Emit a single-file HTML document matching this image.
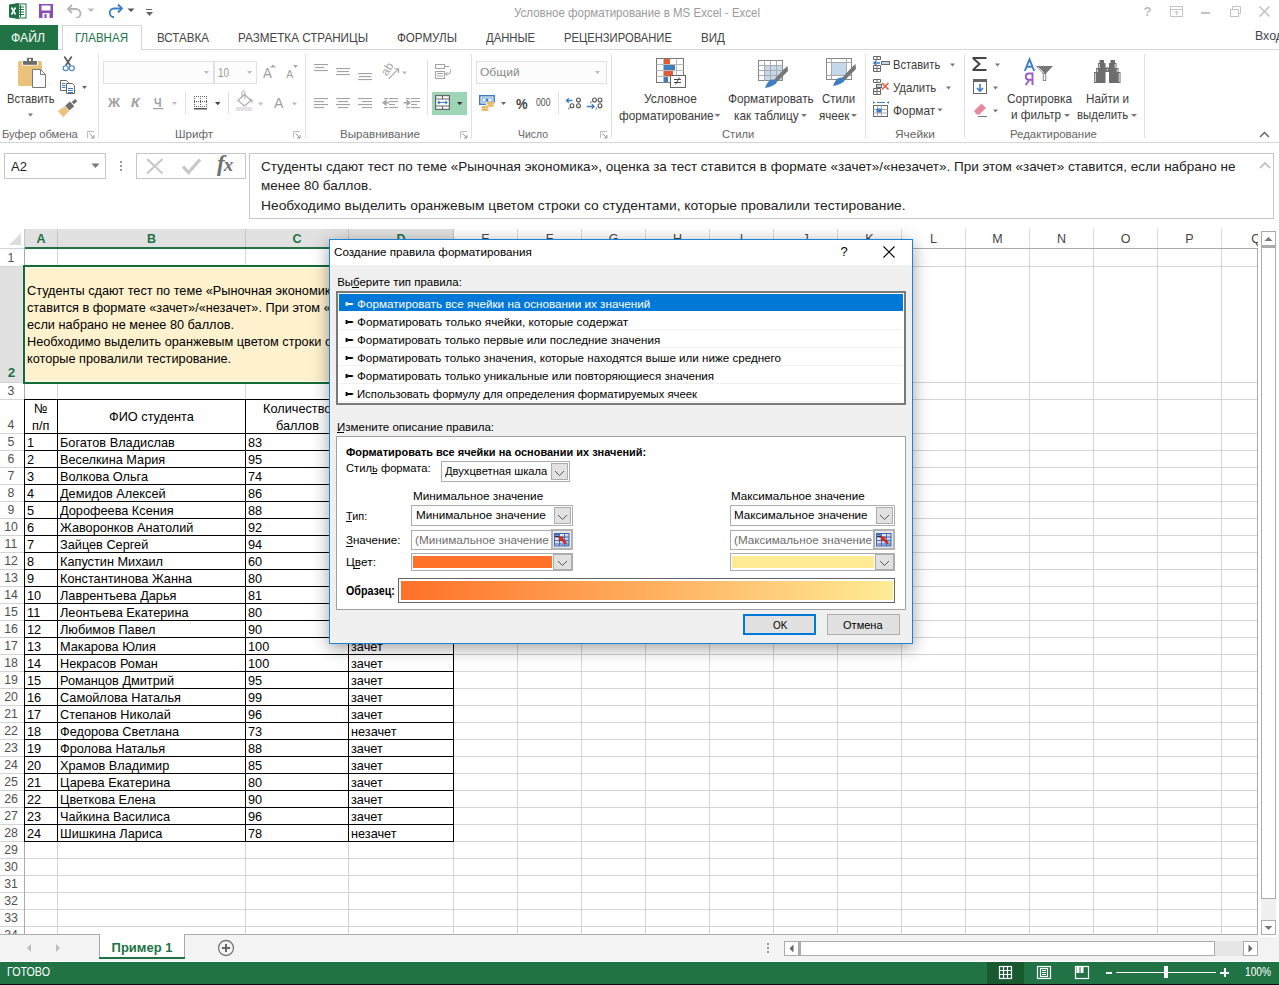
<!DOCTYPE html>
<html><head><meta charset="utf-8"><title>Excel</title><style>*{margin:0;padding:0;box-sizing:border-box}
html,body{width:1279px;height:985px;overflow:hidden}
body{position:relative;background:#fff;font-family:"Liberation Sans",sans-serif}
.a{position:absolute}
.t{position:absolute;white-space:nowrap}
</style></head><body>
<svg class="a" style="left:8px;top:2px" width="20" height="18" viewBox="0 0 20 18">
<rect x="8" y="2" width="10" height="14" fill="#fff" stroke="#1e7145" stroke-width="1"/>
<path d="M10 5H16M10 7.5H16M10 10H16M10 12.5H16M12.5 3V15" stroke="#1e7145" stroke-width="1"/>
<path d="M1 2.5 L11 1 V17 L1 15.5 Z" fill="#1e7145"/>
<path d="M3.5 5.5 L7.5 12.5 M7.5 5.5 L3.5 12.5" stroke="#fff" stroke-width="1.6"/>
</svg>
<svg class="a" style="left:38px;top:3px" width="16" height="16" viewBox="0 0 16 16">
<path d="M1 1H15V15H1Z" fill="#8a4fb5"/>
<rect x="3.5" y="2.5" width="9" height="5" fill="#fff"/>
<rect x="4.5" y="10" width="7" height="5" fill="#fff"/>
<rect x="6.5" y="11" width="2" height="4" fill="#8a4fb5"/>
</svg>
<svg class="a" style="left:66px;top:3px" width="18" height="15" viewBox="0 0 18 15">
<path d="M6 2 L2 6 L6 10" fill="none" stroke="#b3b3b3" stroke-width="1.8"/>
<path d="M2.5 6 H10 A4.5 4.5 0 0 1 10 15" fill="none" stroke="#b3b3b3" stroke-width="1.8"/>
</svg>
<svg class="a" style="left:87px;top:8px" width="8" height="5"><path d="M0.5 0.5H7.5L4 4Z" fill="#bbb"/></svg>
<svg class="a" style="left:106px;top:3px" width="18" height="15" viewBox="0 0 18 15">
<path d="M12 1.5 L16 5.5 L12 9.5" fill="none" stroke="#3a7cc4" stroke-width="1.8"/>
<path d="M15.5 5.5 H8 A4.2 4.2 0 0 0 8 14" fill="none" stroke="#3a7cc4" stroke-width="1.8"/>
</svg>
<svg class="a" style="left:127px;top:8px" width="8" height="5"><path d="M0.5 0.5H7.5L4 4Z" fill="#555"/></svg>
<svg class="a" style="left:145px;top:8px" width="9" height="9"><rect x="1" y="1" width="6" height="1" fill="#666"/><path d="M1 4H8L4.5 8Z" fill="#666"/></svg>
<div class="t" style="left:514.00px;top:5px;font-size:13.41px;line-height:15px;color:#9b9b9b;transform:scaleX(0.859);transform-origin:0 0;">Условное форматирование в MS Excel - Excel</div>
<div class="t" style="left:1143.53px;top:4px;font-size:13px;line-height:15px;color:#bdbdbd;font-weight:bold;">?</div>
<svg class="a" style="left:1169px;top:5px" width="16" height="13"><rect x="1.5" y="1.5" width="12" height="10" fill="none" stroke="#c4c4c4"/><path d="M1.5 4.5H13.5" stroke="#c4c4c4"/><path d="M7.5 10V6M5.5 8L7.5 6L9.5 8" fill="none" stroke="#c4c4c4"/></svg>
<div class="a" style="left:1201px;top:12px;width:9px;height:2px;background:#c4c4c4"></div>
<svg class="a" style="left:1229px;top:5px" width="13" height="13"><rect x="1.5" y="4.5" width="8" height="7" fill="none" stroke="#c4c4c4"/><path d="M3.5 4.5V1.5H11.5V8.5H9.5" fill="none" stroke="#c4c4c4"/></svg>
<svg class="a" style="left:1258px;top:5px" width="13" height="13"><path d="M1.5 1.5L11.5 11.5M11.5 1.5L1.5 11.5" stroke="#c4c4c4" stroke-width="1.6"/></svg>
<div class="a" style="left:0px;top:49px;width:1279px;height:1px;background:#d5d5d5"></div>
<div class="a" style="left:0px;top:25px;width:58px;height:25px;background:#217346"></div>
<div class="t" style="left:11.00px;top:31px;font-size:12.43px;line-height:14px;color:#fff;transform:scaleX(0.984);transform-origin:0 0;">ФАЙЛ</div>
<div class="a" style="left:62px;top:25px;width:80px;height:25px;background:#fff;border:1px solid #d5d5d5;border-bottom:none"></div>
<div class="t" style="left:75.00px;top:31px;font-size:12.43px;line-height:14px;color:#217346;transform:scaleX(0.930);transform-origin:0 0;">ГЛАВНАЯ</div>
<div class="t" style="left:157.00px;top:31px;font-size:12.43px;line-height:14px;color:#444;transform:scaleX(0.933);transform-origin:0 0;">ВСТАВКА</div>
<div class="t" style="left:238.00px;top:31px;font-size:12.43px;line-height:14px;color:#444;transform:scaleX(0.940);transform-origin:0 0;">РАЗМЕТКА СТРАНИЦЫ</div>
<div class="t" style="left:397.00px;top:31px;font-size:12.43px;line-height:14px;color:#444;transform:scaleX(0.934);transform-origin:0 0;">ФОРМУЛЫ</div>
<div class="t" style="left:486.00px;top:31px;font-size:12.43px;line-height:14px;color:#444;transform:scaleX(0.908);transform-origin:0 0;">ДАННЫЕ</div>
<div class="t" style="left:564.00px;top:31px;font-size:12.43px;line-height:14px;color:#444;transform:scaleX(0.903);transform-origin:0 0;">РЕЦЕНЗИРОВАНИЕ</div>
<div class="t" style="left:701.00px;top:31px;font-size:12.43px;line-height:14px;color:#444;transform:scaleX(0.936);transform-origin:0 0;">ВИД</div>
<div class="t" style="left:1255.00px;top:28px;font-size:13.27px;line-height:15px;color:#444;transform:scaleX(0.933);transform-origin:0 0;">Вход</div>
<div class="a" style="left:0px;top:142px;width:1279px;height:1px;background:#d5d5d5"></div>
<div class="a" style="left:98px;top:54px;width:1px;height:84px;background:#e1e1e1"></div>
<div class="a" style="left:305px;top:54px;width:1px;height:84px;background:#e1e1e1"></div>
<div class="a" style="left:471px;top:54px;width:1px;height:84px;background:#e1e1e1"></div>
<div class="a" style="left:611px;top:54px;width:1px;height:84px;background:#e1e1e1"></div>
<div class="a" style="left:865px;top:54px;width:1px;height:84px;background:#e1e1e1"></div>
<div class="a" style="left:964px;top:54px;width:1px;height:84px;background:#e1e1e1"></div>
<div class="a" style="left:1144px;top:54px;width:1px;height:84px;background:#e1e1e1"></div>
<div class="t" style="left:2.00px;top:128px;font-size:11.17px;line-height:12px;color:#666;">Буфер обмена</div>
<div class="t" style="left:175.00px;top:128px;font-size:11.17px;line-height:12px;color:#666;transform:scaleX(1.034);transform-origin:0 0;">Шрифт</div>
<div class="t" style="left:340.00px;top:128px;font-size:11.17px;line-height:12px;color:#666;transform:scaleX(1.040);transform-origin:0 0;">Выравнивание</div>
<div class="t" style="left:518.00px;top:128px;font-size:11.17px;line-height:12px;color:#666;transform:scaleX(0.934);transform-origin:0 0;">Число</div>
<div class="t" style="left:722.00px;top:128px;font-size:11.17px;line-height:12px;color:#666;">Стили</div>
<div class="t" style="left:895.00px;top:128px;font-size:11.17px;line-height:12px;color:#666;transform:scaleX(1.068);transform-origin:0 0;">Ячейки</div>
<div class="t" style="left:1010.00px;top:128px;font-size:11.17px;line-height:12px;color:#666;transform:scaleX(1.022);transform-origin:0 0;">Редактирование</div>
<svg class="a" style="left:87px;top:131px" width="8" height="8"><path d="M0.5 7V0.5H7" fill="none" stroke="#bbb"/><path d="M2.5 2.5L7 7M7 4V7H4" fill="none" stroke="#999"/></svg>
<svg class="a" style="left:293px;top:131px" width="8" height="8"><path d="M0.5 7V0.5H7" fill="none" stroke="#bbb"/><path d="M2.5 2.5L7 7M7 4V7H4" fill="none" stroke="#999"/></svg>
<svg class="a" style="left:460px;top:131px" width="8" height="8"><path d="M0.5 7V0.5H7" fill="none" stroke="#bbb"/><path d="M2.5 2.5L7 7M7 4V7H4" fill="none" stroke="#999"/></svg>
<svg class="a" style="left:600px;top:131px" width="8" height="8"><path d="M0.5 7V0.5H7" fill="none" stroke="#bbb"/><path d="M2.5 2.5L7 7M7 4V7H4" fill="none" stroke="#999"/></svg>
<svg class="a" style="left:1259px;top:131px" width="11" height="7"><path d="M1 6L5.5 1.5L10 6" fill="none" stroke="#666" stroke-width="1.5"/></svg>
<div class="a" style="left:4px;top:153px;width:102px;height:26px;border:1px solid #c6c6c6;background:#fff"></div>
<div class="t" style="left:11.00px;top:159px;font-size:13px;line-height:15px;color:#222;">A2</div>
<svg class="a" style="left:91px;top:163px" width="9" height="6"><path d="M0.5 0.5H8.5L4.5 5Z" fill="#777"/></svg>
<div class="a" style="left:120px;top:161px;width:2px;height:2px;background:#999"></div>
<div class="a" style="left:120px;top:165px;width:2px;height:2px;background:#999"></div>
<div class="a" style="left:120px;top:169px;width:2px;height:2px;background:#999"></div>
<div class="a" style="left:136px;top:153px;width:110px;height:26px;border:1px solid #c6c6c6;background:#fff"></div>
<svg class="a" style="left:144px;top:156px" width="20" height="20"><path d="M3 3L18.5 17.5M18.5 3L3 17.5" stroke="#c8c8c8" stroke-width="2.1"/></svg>
<svg class="a" style="left:180px;top:157px" width="22" height="19"><path d="M3 9.5L8.5 15.5L20 2.5" fill="none" stroke="#c8c8c8" stroke-width="3.2"/></svg>
<div class="t" style="left:217px;top:151px;font-family:'Liberation Serif',serif;font-style:italic;font-weight:bold;font-size:23px;line-height:26px;color:#707070;letter-spacing:-1px">f<span style="font-size:19px">x</span></div>
<div class="a" style="left:249px;top:153px;width:1025px;height:66px;border:1px solid #c6c6c6;background:#fff"></div>
<div class="t" style="left:261.00px;top:159px;font-size:13.27px;line-height:15px;color:#222;transform:scaleX(1.018);transform-origin:0 0;">Студенты сдают тест по теме «Рыночная экономика», оценка за тест ставится в формате «зачет»/«незачет». При этом «зачет» ставится, если набрано не</div>
<div class="t" style="left:261.00px;top:178px;font-size:13.27px;line-height:15px;color:#222;transform:scaleX(1.017);transform-origin:0 0;">менее 80 баллов.</div>
<div class="t" style="left:261.00px;top:198px;font-size:13.27px;line-height:15px;color:#222;transform:scaleX(1.040);transform-origin:0 0;">Необходимо выделить оранжевым цветом строки со студентами, которые провалили тестирование.</div>
<svg class="a" style="left:1259px;top:161px" width="12" height="8"><path d="M1 7L6 2L11 7" fill="none" stroke="#c6c6c6" stroke-width="2"/></svg>
<svg class="a" style="left:0;top:0" width="1279" height="143" viewBox="0 0 1279 143"><rect x="18" y="61" width="24" height="25" rx="1.5" fill="#eac27c"/><rect x="22" y="60.5" width="16" height="5" fill="#fff"/><rect x="23" y="61" width="14" height="3.8" fill="#6d6d6d"/><rect x="27" y="57.8" width="6" height="3.6" fill="#6d6d6d"/><rect x="29" y="59" width="2" height="2" fill="#fff"/><path d="M32.5 69.5H40.5L45.5 74.5V87.5H32.5Z" fill="#fff" stroke="#777" stroke-width="1"/><path d="M40.5 69.5V74.5H45.5" fill="none" stroke="#777" stroke-width="1"/><path d="M28 113.5H33L30.5 116.5Z" fill="#777"/><path d="M64.3 56.5L70.3 65.5M71.7 56.5L65.7 65.5" stroke="#5a5a5a" stroke-width="1.7" fill="none"/><circle cx="65.7" cy="68.2" r="2.5" fill="#fff" stroke="#3e7fc4" stroke-width="1.1"/><circle cx="71.8" cy="68.2" r="2.5" fill="#fff" stroke="#3e7fc4" stroke-width="1.1"/><path d="M60.5 80.5H66.5L68.5 82.5V90.5H60.5Z" fill="#fff" stroke="#666" stroke-width="1"/><rect x="62" y="83" width="3.5" height="1" fill="#3e7fc4"/><rect x="62" y="85" width="3.5" height="1" fill="#3e7fc4"/><rect x="62" y="87" width="3.5" height="1" fill="#3e7fc4"/><path d="M66.5 83.5H72.5L74.5 85.5V93.5H66.5Z" fill="#fff" stroke="#666" stroke-width="1"/><rect x="68" y="88" width="5" height="1" fill="#3e7fc4"/><rect x="68" y="90" width="5" height="1" fill="#3e7fc4"/><rect x="68" y="92" width="5" height="1" fill="#3e7fc4"/><path d="M82 86H87L84.5 89.0Z" fill="#666"/><g transform="translate(68 107.5) rotate(-42)"><path d="M-10 -4.2L-1.5 -3.2V3.2L-10 4.2Z" fill="#eac27c"/><rect x="-1" y="-3.2" width="6.5" height="6.4" fill="#6d6d6d"/><rect x="6.5" y="-1.6" width="4.5" height="3.2" fill="#6d6d6d"/></g><rect x="103.5" y="61.5" width="110" height="22" fill="#fcfcfc" stroke="#e1e1e1"/><rect x="214.5" y="61.5" width="42" height="22" fill="#fcfcfc" stroke="#e1e1e1"/><path d="M204 71H209L206.5 74.0Z" fill="#bbb"/><path d="M247 71H252L249.5 74.0Z" fill="#bbb"/><path d="M270 67.5L273 64.5L276 67.5Z" fill="#aaa"/><path d="M293 65H298L295.5 68Z" fill="#aaa"/><path d="M238 100.5L244.5 94.5L251 100.5L244.5 106Z" fill="#fff" stroke="#a9a9a9" stroke-width="1.1"/><path d="M242 97V92.5Q242 91 243.5 91Q245 91 245 92.5V99" fill="none" stroke="#a9a9a9" stroke-width="1"/><path d="M249.5 99Q253 98 252.5 104L251 101Z" fill="#a9a9a9"/><rect x="236" y="107" width="16" height="4" fill="#e5e1e5"/><rect x="194" y="96" width="1" height="1" fill="#666"/><rect x="194" y="98" width="1" height="1" fill="#666"/><rect x="194" y="100" width="1" height="1" fill="#666"/><rect x="194" y="101" width="1" height="1" fill="#666"/><rect x="194" y="102" width="1" height="1" fill="#666"/><rect x="194" y="104" width="1" height="1" fill="#666"/><rect x="194" y="106" width="1" height="1" fill="#666"/><rect x="196" y="96" width="1" height="1" fill="#666"/><rect x="196" y="101" width="1" height="1" fill="#666"/><rect x="196" y="106" width="1" height="1" fill="#666"/><rect x="198" y="96" width="1" height="1" fill="#666"/><rect x="198" y="101" width="1" height="1" fill="#666"/><rect x="198" y="106" width="1" height="1" fill="#666"/><rect x="200" y="96" width="1" height="1" fill="#666"/><rect x="200" y="98" width="1" height="1" fill="#666"/><rect x="200" y="100" width="1" height="1" fill="#666"/><rect x="200" y="101" width="1" height="1" fill="#666"/><rect x="200" y="102" width="1" height="1" fill="#666"/><rect x="200" y="104" width="1" height="1" fill="#666"/><rect x="200" y="106" width="1" height="1" fill="#666"/><rect x="202" y="96" width="1" height="1" fill="#666"/><rect x="202" y="101" width="1" height="1" fill="#666"/><rect x="202" y="106" width="1" height="1" fill="#666"/><rect x="204" y="96" width="1" height="1" fill="#666"/><rect x="204" y="101" width="1" height="1" fill="#666"/><rect x="204" y="106" width="1" height="1" fill="#666"/><rect x="206" y="96" width="1" height="1" fill="#666"/><rect x="206" y="98" width="1" height="1" fill="#666"/><rect x="206" y="100" width="1" height="1" fill="#666"/><rect x="206" y="101" width="1" height="1" fill="#666"/><rect x="206" y="102" width="1" height="1" fill="#666"/><rect x="206" y="104" width="1" height="1" fill="#666"/><rect x="206" y="106" width="1" height="1" fill="#666"/><rect x="194" y="108" width="13" height="1.5" fill="#555"/><path d="M215 102H220.5L217.75 105.25Z" fill="#444"/><path d="M172 102H177L174.5 105.0Z" fill="#bbb"/><path d="M258 102.5H263L260.5 105.5Z" fill="#bbb"/><path d="M292 102.5H297L294.5 105.5Z" fill="#bbb"/><rect x="185" y="92" width="1" height="22" fill="#e1e1e1"/><rect x="228" y="92" width="1" height="22" fill="#e1e1e1"/><rect x="153" y="108" width="10.5" height="1.2" fill="#9e9e9e"/><rect x="314" y="64" width="14" height="1.1" fill="#a3a3a3"/><rect x="315" y="67" width="9" height="1.1" fill="#a3a3a3"/><rect x="314" y="70" width="14" height="1.1" fill="#a3a3a3"/><rect x="336" y="68" width="14" height="1.1" fill="#a3a3a3"/><rect x="337" y="71" width="12" height="1.1" fill="#a3a3a3"/><rect x="336" y="74" width="14" height="1.1" fill="#a3a3a3"/><rect x="358" y="73" width="14" height="1.1" fill="#a3a3a3"/><rect x="359" y="76" width="12" height="1.1" fill="#a3a3a3"/><rect x="358" y="79" width="14" height="1.1" fill="#a3a3a3"/><rect x="314" y="98" width="14" height="1.1" fill="#a3a3a3"/><rect x="314" y="101" width="10" height="1.1" fill="#a3a3a3"/><rect x="314" y="104" width="14" height="1.1" fill="#a3a3a3"/><rect x="314" y="107" width="10" height="1.1" fill="#a3a3a3"/><rect x="336" y="98" width="14" height="1.1" fill="#a3a3a3"/><rect x="338" y="101" width="10" height="1.1" fill="#a3a3a3"/><rect x="336" y="104" width="14" height="1.1" fill="#a3a3a3"/><rect x="338" y="107" width="10" height="1.1" fill="#a3a3a3"/><rect x="358" y="98" width="14" height="1.1" fill="#a3a3a3"/><rect x="362" y="101" width="10" height="1.1" fill="#a3a3a3"/><rect x="358" y="104" width="14" height="1.1" fill="#a3a3a3"/><rect x="362" y="107" width="10" height="1.1" fill="#a3a3a3"/><rect x="384" y="98" width="4" height="1.1" fill="#a3a3a3"/><rect x="389" y="101" width="9" height="1.1" fill="#a3a3a3"/><rect x="389" y="104" width="6" height="1.1" fill="#a3a3a3"/><rect x="384" y="107" width="4" height="1.1" fill="#a3a3a3"/><rect x="389" y="98" width="9" height="1.1" fill="#a3a3a3"/><rect x="389" y="107" width="9" height="1.1" fill="#a3a3a3"/><path d="M382 102.8L386.5 99.3V106.3Z" fill="#a3a3a3"/><rect x="386" y="102" width="3" height="1.5" fill="#a3a3a3"/><rect x="406" y="98" width="4" height="1.1" fill="#a3a3a3"/><rect x="411" y="101" width="9" height="1.1" fill="#a3a3a3"/><rect x="411" y="104" width="6" height="1.1" fill="#a3a3a3"/><rect x="406" y="107" width="4" height="1.1" fill="#a3a3a3"/><rect x="411" y="98" width="9" height="1.1" fill="#a3a3a3"/><rect x="411" y="107" width="9" height="1.1" fill="#a3a3a3"/><path d="M411 102.8L406.5 99.3V106.3Z" fill="#a3a3a3"/><rect x="403.5" y="102" width="3.5" height="1.5" fill="#a3a3a3"/><text x="0" y="0" transform="translate(387 76.5) rotate(-58)" font-family="Liberation Sans" font-size="11.5" fill="#a3a3a3">ab</text><path d="M388.5 78.8L398.2 69.2M394.5 68.8H398.6V72.9" fill="none" stroke="#a3a3a3" stroke-width="1.1"/><path d="M402 71.5H407L404.5 74.5Z" fill="#bbb"/><rect x="427" y="60" width="1" height="55" fill="#e1e1e1"/><rect x="435.5" y="64.5" width="9" height="4" fill="none" stroke="#a3a3a3"/><path d="M445 66.5H449" stroke="#a3a3a3"/><rect x="435.5" y="71.5" width="9" height="7" fill="none" stroke="#a3a3a3"/><rect x="437" y="73" width="6" height="1" fill="#a3a3a3"/><rect x="437" y="75.5" width="6" height="1" fill="#a3a3a3"/><path d="M450.5 69.5V71.5Q450.5 74 447 74H445.5M447.5 72L445.5 74L447.5 76" fill="none" stroke="#a3a3a3"/><rect x="432" y="92" width="35" height="23" fill="#9fd5b7"/><rect x="435.6" y="95.6" width="13.8" height="13.8" fill="#fff" stroke="#666" stroke-width="1.2"/><path d="M435.6 99H449.4M435.6 106H449.4M442.5 95.6V99M442.5 106V109.4" stroke="#666" stroke-width="1.1"/><path d="M438 102.5H447M439.5 101L438 102.5L439.5 104M445.5 101L447 102.5L445.5 104" fill="none" stroke="#3e7fc4" stroke-width="1.2"/><path d="M457 102H462.5L459.75 105.25Z" fill="#333"/><rect x="476.5" y="61.5" width="130" height="22" fill="#fcfcfc" stroke="#e1e1e1"/><path d="M595 71H600L597.5 74.0Z" fill="#bbb"/><rect x="479.75" y="95.75" width="14.5" height="8.5" fill="#fff" stroke="#3e7fc4" stroke-width="1.5"/><rect x="482" y="98" width="10" height="4" fill="#fff" stroke="#3e7fc4" stroke-width="0.8"/><circle cx="487" cy="100" r="1.6" fill="#3e7fc4"/><rect x="486" y="102.5" width="9" height="7" fill="#fff"/><ellipse cx="490.5" cy="103.2" rx="3.8" ry="1.4" fill="#e8b96a"/><ellipse cx="490.5" cy="105.6" rx="3.8" ry="1.3" fill="#e8b96a"/><rect x="481" y="106.5" width="8" height="5" fill="#fff"/><ellipse cx="485" cy="107.3" rx="3.8" ry="1.4" fill="#e8b96a"/><ellipse cx="485" cy="109.8" rx="3.8" ry="1.3" fill="#e8b96a"/><path d="M501 102H506L503.5 105.0Z" fill="#666"/><rect x="558" y="92" width="1" height="22" fill="#e1e1e1"/><path d="M566.5 100.5H572.5M568.8 98.3L566.5 100.5L568.8 102.7" fill="none" stroke="#3e7fc4" stroke-width="1.4"/><ellipse cx="578.5" cy="100" rx="1.9" ry="2.0" fill="none" stroke="#505050" stroke-width="1.1"/><ellipse cx="572" cy="105.8" rx="1.9" ry="2.0" fill="none" stroke="#505050" stroke-width="1.1"/><ellipse cx="578.5" cy="105.8" rx="1.9" ry="2.0" fill="none" stroke="#505050" stroke-width="1.1"/><path d="M569.3 107.5L568.5 109.3" stroke="#505050" stroke-width="1"/><ellipse cx="594.5" cy="100" rx="1.9" ry="2.0" fill="none" stroke="#505050" stroke-width="1.1"/><ellipse cx="600" cy="100" rx="1.9" ry="2.0" fill="none" stroke="#505050" stroke-width="1.1"/><path d="M591.3 101.5L590.5 103.3" stroke="#505050" stroke-width="1"/><path d="M587 106.5H594M591.8 104.3L594 106.5L591.8 108.7" fill="none" stroke="#3e7fc4" stroke-width="1.4"/><ellipse cx="600" cy="105.8" rx="1.9" ry="2.0" fill="none" stroke="#505050" stroke-width="1.1"/><path d="M596.8 107.5L596 109.3" stroke="#505050" stroke-width="1"/><rect x="656.5" y="58.5" width="27" height="24" fill="#fff" stroke="#777"/><path d="M663.5 58.5V82.5M676.5 58.5V82.5M656.5 64.5H683.5M656.5 70.5H683.5M656.5 76.5H683.5" stroke="#bbb"/><rect x="664" y="59" width="6" height="5" fill="#e05a3a"/><rect x="664" y="65" width="11" height="5" fill="#3f7dbf"/><rect x="664" y="71" width="9" height="5" fill="#e05a3a"/><rect x="664" y="77" width="4" height="5" fill="#3f7dbf"/><rect x="670.5" y="75.5" width="15" height="12" fill="#fff" stroke="#666"/><path d="M674 79.5H681M674 82.5H681M679.5 77.5L675.5 84.5" stroke="#333" stroke-width="0.9"/><rect x="758.5" y="60.5" width="24" height="20" fill="#fff" stroke="#888"/><rect x="765" y="66" width="17" height="14" fill="#c5d7ea"/><path d="M764.5 60.5V80.5M770.5 60.5V80.5M776.5 60.5V80.5M758.5 65.5H782.5M758.5 70.5H782.5M758.5 75.5H782.5" stroke="#aaa"/><path d="M773 81L784 69L787.5 66L788 71L777 82Z" fill="#777"/><path d="M765 88Q767 81 772 79.5Q776 79 777 82Q775 86 765 88Z" fill="#3e7fc4"/><rect x="826.5" y="58.5" width="25" height="21" fill="#fff" stroke="#888"/><rect x="832" y="63" width="14" height="12" fill="#c5d7ea"/><path d="M831.5 58.5V79.5M846.5 58.5V79.5M826.5 62.5H851.5M826.5 75.5H851.5" stroke="#aaa"/><path d="M841 79L852 67L855.5 64L856 69L845 80Z" fill="#777"/><path d="M833 86Q835 79 840 77.5Q844 77 845 80Q843 84 833 86Z" fill="#3e7fc4"/><path d="M873.5 56.5H880.5V59.5H873.5ZM873.5 65.5H880.5V71.5H873.5ZM873.5 68.5H880.5M877 65.5V71.5M877 56.5V59.5" fill="none" stroke="#666"/><rect x="881.5" y="61.5" width="8" height="3" fill="#c5d7ea" stroke="#666"/><path d="M874 63H880M876.5 60.5L874 63L876.5 65.5" fill="none" stroke="#3e7fc4" stroke-width="1.5"/><path d="M873.5 79.5H880.5V82.5H873.5ZM873.5 88.5H880.5V94.5H873.5ZM873.5 91.5H880.5M877 88.5V94.5M877 79.5V82.5" fill="none" stroke="#666"/><rect x="876.5" y="84.5" width="5" height="3" fill="#c5d7ea" stroke="#666"/><path d="M882 83L888.5 89.5M888.5 83L882 89.5" stroke="#e05a3a" stroke-width="1.5"/><path d="M873 102.5H875M877 102.5H885M887 102.5H889M873.5 101.5V103.5M888.5 101.5V103.5" stroke="#3e7fc4"/><rect x="873.5" y="105.5" width="14" height="11" fill="#fff" stroke="#666"/><path d="M873.5 109.5H887.5M873.5 113H887.5M877.5 105.5V116.5M881.5 105.5V116.5" stroke="#aaa"/><rect x="876.5" y="108.5" width="5" height="4" fill="#3e7fc4"/><path d="M950 63.5H955L952.5 66.5Z" fill="#777"/><path d="M946 86.5H951L948.5 89.5Z" fill="#777"/><path d="M937.5 108.5H942.5L940.0 111.5Z" fill="#777"/><path d="M972.5 57H986.5V59H975.5L981 64L975.5 69H986.5V71H972.5V69L978 64L972.5 59Z" fill="#444"/><path d="M995 63.5H1000L997.5 66.5Z" fill="#777"/><rect x="973.5" y="79.5" width="13" height="14" fill="#fff" stroke="#666"/><rect x="973" y="79" width="14" height="3" fill="#666"/><path d="M980 84V91M977 88L980 91L983 88" fill="none" stroke="#3e7fc4" stroke-width="1.6"/><path d="M993 86.5H998L995.5 89.5Z" fill="#777"/><path d="M974 111L981.5 103.5L986 108L979.5 114.5L976.5 114.5Z" fill="#e58a9e"/><path d="M978 116.5H987" stroke="#777"/><path d="M993 109.5H998L995.5 112.5Z" fill="#777"/><path d="M1024.8 71L1029.5 59.3L1034.2 71M1026.6 66.8H1032.4" fill="none" stroke="#3e7fc4" stroke-width="1.9"/><path d="M1032.5 85V73.5H1029Q1025.8 73.5 1025.8 76.7Q1025.8 79.8 1029 79.8H1032.5M1029.5 79.8L1025.6 85" fill="none" stroke="#9b59c9" stroke-width="1.9"/><path d="M1036 66H1053L1046.2 73.3V81H1042.8V73.3Z" fill="#777"/><path d="M1038.3 67.3L1043.6 72.8" stroke="#fff" stroke-width="0.9"/><rect x="1043.7" y="74" width="1.6" height="6.2" fill="#fff"/><path d="M1099.5 60H1104V63H1105.5V83H1094V72H1096V68H1098V63H1099.5Z" fill="#6d6d6d"/><path d="M1115 60H1110.5V63H1109V83H1120.5V72H1118.5V68H1116.5V63H1115Z" fill="#6d6d6d"/><rect x="1105" y="67.5" width="4.5" height="4.5" fill="#6d6d6d"/><rect x="1106.7" y="69.2" width="1.2" height="1.2" fill="#fff"/><path d="M1095.3 73V82M1097.3 69V72M1099.3 64V68M1119.2 73V82M1117.2 69V72M1115.2 64V68" stroke="#fff" stroke-width="0.8"/></svg>
<div class="t" style="left:6.50px;top:92px;font-size:11.94px;line-height:14px;color:#3c3c3c;transform:scaleX(0.939);transform-origin:0 0;">Вставить</div>
<div class="t" style="left:108.00px;top:95px;font-size:12.85px;line-height:15px;color:#9e9e9e;font-weight:bold;transform:scaleX(1.033);transform-origin:0 0;">Ж</div>
<div class="t" style="left:131.00px;top:95px;font-size:12.85px;line-height:15px;color:#9e9e9e;font-weight:bold;transform:scaleX(1.084);transform-origin:0 0;font-style:italic;">К</div>
<div class="t" style="left:154.00px;top:95px;font-size:12.85px;line-height:15px;color:#9e9e9e;font-weight:bold;transform:scaleX(0.831);transform-origin:0 0;">Ч</div>
<div class="t" style="left:217.80px;top:66px;font-size:12.01px;line-height:14px;color:#999;transform:scaleX(0.823);transform-origin:0 0;">10</div>
<div class="t" style="left:263.30px;top:65px;font-size:13.83px;line-height:16px;color:#9e9e9e;transform:scaleX(0.965);transform-origin:0 0;">A</div>
<div class="t" style="left:286.30px;top:69px;font-size:10.47px;line-height:11px;color:#9e9e9e;">A</div>
<div class="t" style="left:273.60px;top:94px;font-size:15.08px;line-height:17px;color:#9e9e9e;transform:scaleX(0.935);transform-origin:0 0;">A</div>
<div class="t" style="left:479.75px;top:66px;font-size:11.17px;line-height:12px;color:#8a8a8a;transform:scaleX(1.079);transform-origin:0 0;">Общий</div>
<div class="t" style="left:515.70px;top:96px;font-size:14.8px;line-height:16px;color:#444;font-weight:bold;transform:scaleX(0.882);transform-origin:0 0;">%</div>
<div class="t" style="left:535.70px;top:97px;font-size:10.06px;line-height:11px;color:#505050;transform:scaleX(0.864);transform-origin:0 0;">000</div>
<div class="t" style="left:644.10px;top:92px;font-size:12.29px;line-height:14px;color:#3c3c3c;transform:scaleX(0.975);transform-origin:0 0;">Условное</div>
<div class="t" style="left:619.10px;top:109px;font-size:12.29px;line-height:14px;color:#3c3c3c;transform:scaleX(0.959);transform-origin:0 0;">форматирование</div>
<div class="t" style="left:727.50px;top:92px;font-size:12.29px;line-height:14px;color:#3c3c3c;transform:scaleX(0.962);transform-origin:0 0;">Форматировать</div>
<div class="t" style="left:734.40px;top:109px;font-size:12.29px;line-height:14px;color:#3c3c3c;transform:scaleX(0.960);transform-origin:0 0;">как таблицу</div>
<div class="t" style="left:822.40px;top:92px;font-size:12.29px;line-height:14px;color:#3c3c3c;transform:scaleX(0.935);transform-origin:0 0;">Стили</div>
<div class="t" style="left:819.40px;top:109px;font-size:12.29px;line-height:14px;color:#3c3c3c;transform:scaleX(0.947);transform-origin:0 0;">ячеек</div>
<div class="t" style="left:892.50px;top:58px;font-size:12.43px;line-height:14px;color:#3c3c3c;transform:scaleX(0.896);transform-origin:0 0;">Вставить</div>
<div class="t" style="left:892.50px;top:81px;font-size:12.57px;line-height:14px;color:#3c3c3c;transform:scaleX(0.902);transform-origin:0 0;">Удалить</div>
<div class="t" style="left:892.50px;top:103px;font-size:12.99px;line-height:15px;color:#3c3c3c;transform:scaleX(0.915);transform-origin:0 0;">Формат</div>
<div class="t" style="left:1006.50px;top:92px;font-size:12.57px;line-height:14px;color:#3c3c3c;transform:scaleX(0.944);transform-origin:0 0;">Сортировка</div>
<div class="t" style="left:1010.50px;top:108px;font-size:12.57px;line-height:14px;color:#3c3c3c;transform:scaleX(0.936);transform-origin:0 0;">и фильтр</div>
<div class="t" style="left:1085.50px;top:92px;font-size:12.57px;line-height:14px;color:#3c3c3c;transform:scaleX(0.931);transform-origin:0 0;">Найти и</div>
<div class="t" style="left:1077.40px;top:108px;font-size:12.57px;line-height:14px;color:#3c3c3c;transform:scaleX(0.911);transform-origin:0 0;">выделить</div>
<svg class="a" style="left:0;top:0" width="1279" height="143"><path d="M714.5 114H720.5L717.5 117Z" fill="#777"/><path d="M801 114H807L804 117Z" fill="#777"/><path d="M851 114H857L854 117Z" fill="#777"/><path d="M1064 114H1070L1067 117Z" fill="#777"/><path d="M1131 114H1137L1134 117Z" fill="#777"/></svg>
<div class="a" style="left:0px;top:229px;width:1257px;height:19px;background:#fff"></div>
<div class="a" style="left:25px;top:229px;width:428px;height:18px;background:#e1e1e1"></div>
<div class="a" style="left:57px;top:229px;width:1px;height:18px;background:#c6c6c6"></div>
<div class="a" style="left:245px;top:229px;width:1px;height:18px;background:#c6c6c6"></div>
<div class="a" style="left:348px;top:229px;width:1px;height:18px;background:#c6c6c6"></div>
<div class="a" style="left:453px;top:229px;width:1px;height:18px;background:#c6c6c6"></div>
<div class="a" style="left:517px;top:229px;width:1px;height:18px;background:#dadada"></div>
<div class="a" style="left:581px;top:229px;width:1px;height:18px;background:#dadada"></div>
<div class="a" style="left:645px;top:229px;width:1px;height:18px;background:#dadada"></div>
<div class="a" style="left:709px;top:229px;width:1px;height:18px;background:#dadada"></div>
<div class="a" style="left:773px;top:229px;width:1px;height:18px;background:#dadada"></div>
<div class="a" style="left:837px;top:229px;width:1px;height:18px;background:#dadada"></div>
<div class="a" style="left:901px;top:229px;width:1px;height:18px;background:#dadada"></div>
<div class="a" style="left:965px;top:229px;width:1px;height:18px;background:#dadada"></div>
<div class="a" style="left:1029px;top:229px;width:1px;height:18px;background:#dadada"></div>
<div class="a" style="left:1093px;top:229px;width:1px;height:18px;background:#dadada"></div>
<div class="a" style="left:1157px;top:229px;width:1px;height:18px;background:#dadada"></div>
<div class="a" style="left:1221px;top:229px;width:1px;height:18px;background:#dadada"></div>
<div class="a" style="left:0px;top:248px;width:24px;height:1px;background:#d4d4d4"></div>
<div class="a" style="left:24px;top:248px;width:1233px;height:1px;background:#ababab"></div>
<div class="a" style="left:24px;top:229px;width:1px;height:19px;background:#c6c6c6"></div>
<div class="a" style="left:25px;top:247px;width:428px;height:2px;background:#217346"></div>
<svg class="a" style="left:8px;top:232px" width="14" height="14"><path d="M13 1 L13 13 L1 13 Z" fill="#dcdcdc"/></svg>
<div class="t" style="left:36.49px;top:232px;font-size:12.5px;line-height:14px;color:#217346;font-weight:bold;">A</div>
<div class="t" style="left:146.99px;top:232px;font-size:12.5px;line-height:14px;color:#217346;font-weight:bold;">B</div>
<div class="t" style="left:292.49px;top:232px;font-size:12.5px;line-height:14px;color:#217346;font-weight:bold;">C</div>
<div class="t" style="left:396.49px;top:232px;font-size:12.5px;line-height:14px;color:#217346;font-weight:bold;">D</div>
<div class="t" style="left:481.33px;top:232px;font-size:12.5px;line-height:14px;color:#444;">E</div>
<div class="t" style="left:545.68px;top:232px;font-size:12.5px;line-height:14px;color:#444;">F</div>
<div class="t" style="left:608.64px;top:232px;font-size:12.5px;line-height:14px;color:#444;">G</div>
<div class="t" style="left:672.99px;top:232px;font-size:12.5px;line-height:14px;color:#444;">H</div>
<div class="t" style="left:739.76px;top:232px;font-size:12.5px;line-height:14px;color:#444;">I</div>
<div class="t" style="left:802.38px;top:232px;font-size:12.5px;line-height:14px;color:#444;">J</div>
<div class="t" style="left:865.33px;top:232px;font-size:12.5px;line-height:14px;color:#444;">K</div>
<div class="t" style="left:930.02px;top:232px;font-size:12.5px;line-height:14px;color:#444;">L</div>
<div class="t" style="left:992.29px;top:232px;font-size:12.5px;line-height:14px;color:#444;">M</div>
<div class="t" style="left:1056.99px;top:232px;font-size:12.5px;line-height:14px;color:#444;">N</div>
<div class="t" style="left:1120.64px;top:232px;font-size:12.5px;line-height:14px;color:#444;">O</div>
<div class="t" style="left:1185.33px;top:232px;font-size:12.5px;line-height:14px;color:#444;">P</div>
<div class="t" style="left:1251.14px;top:232px;font-size:12.5px;line-height:14px;color:#444;">Q</div>
<div class="a" style="left:0px;top:249px;width:24px;height:685px;background:#fff"></div>
<div class="a" style="left:0px;top:267px;width:24px;height:115px;background:#e1e1e1"></div>
<div class="a" style="left:24px;top:249px;width:1px;height:685px;background:#ababab"></div>
<div class="a" style="left:0px;top:266px;width:24px;height:1px;background:#d4d4d4"></div>
<div class="a" style="left:25px;top:266px;width:1232px;height:1px;background:#d4d4d4"></div>
<div class="t" style="left:7.58px;top:251px;font-size:12.3px;line-height:14px;color:#505050;">1</div>
<div class="a" style="left:0px;top:382px;width:24px;height:1px;background:#d4d4d4"></div>
<div class="a" style="left:25px;top:382px;width:1232px;height:1px;background:#d4d4d4"></div>
<div class="t" style="left:7.75px;top:365px;font-size:13.5px;line-height:15px;color:#217346;font-weight:bold;">2</div>
<div class="a" style="left:0px;top:399px;width:24px;height:1px;background:#d4d4d4"></div>
<div class="a" style="left:25px;top:399px;width:1232px;height:1px;background:#d4d4d4"></div>
<div class="t" style="left:7.58px;top:384px;font-size:12.3px;line-height:14px;color:#505050;">3</div>
<div class="a" style="left:0px;top:433px;width:24px;height:1px;background:#d4d4d4"></div>
<div class="a" style="left:25px;top:433px;width:1232px;height:1px;background:#d4d4d4"></div>
<div class="t" style="left:7.58px;top:418px;font-size:12.3px;line-height:14px;color:#505050;">4</div>
<div class="a" style="left:0px;top:450px;width:24px;height:1px;background:#d4d4d4"></div>
<div class="a" style="left:25px;top:450px;width:1232px;height:1px;background:#d4d4d4"></div>
<div class="t" style="left:7.58px;top:435px;font-size:12.3px;line-height:14px;color:#505050;">5</div>
<div class="a" style="left:0px;top:467px;width:24px;height:1px;background:#d4d4d4"></div>
<div class="a" style="left:25px;top:467px;width:1232px;height:1px;background:#d4d4d4"></div>
<div class="t" style="left:7.58px;top:452px;font-size:12.3px;line-height:14px;color:#505050;">6</div>
<div class="a" style="left:0px;top:484px;width:24px;height:1px;background:#d4d4d4"></div>
<div class="a" style="left:25px;top:484px;width:1232px;height:1px;background:#d4d4d4"></div>
<div class="t" style="left:7.58px;top:469px;font-size:12.3px;line-height:14px;color:#505050;">7</div>
<div class="a" style="left:0px;top:501px;width:24px;height:1px;background:#d4d4d4"></div>
<div class="a" style="left:25px;top:501px;width:1232px;height:1px;background:#d4d4d4"></div>
<div class="t" style="left:7.58px;top:486px;font-size:12.3px;line-height:14px;color:#505050;">8</div>
<div class="a" style="left:0px;top:518px;width:24px;height:1px;background:#d4d4d4"></div>
<div class="a" style="left:25px;top:518px;width:1232px;height:1px;background:#d4d4d4"></div>
<div class="t" style="left:7.58px;top:503px;font-size:12.3px;line-height:14px;color:#505050;">9</div>
<div class="a" style="left:0px;top:535px;width:24px;height:1px;background:#d4d4d4"></div>
<div class="a" style="left:25px;top:535px;width:1232px;height:1px;background:#d4d4d4"></div>
<div class="t" style="left:4.16px;top:520px;font-size:12.3px;line-height:14px;color:#505050;">10</div>
<div class="a" style="left:0px;top:552px;width:24px;height:1px;background:#d4d4d4"></div>
<div class="a" style="left:25px;top:552px;width:1232px;height:1px;background:#d4d4d4"></div>
<div class="t" style="left:4.62px;top:537px;font-size:12.3px;line-height:14px;color:#505050;">11</div>
<div class="a" style="left:0px;top:569px;width:24px;height:1px;background:#d4d4d4"></div>
<div class="a" style="left:25px;top:569px;width:1232px;height:1px;background:#d4d4d4"></div>
<div class="t" style="left:4.16px;top:554px;font-size:12.3px;line-height:14px;color:#505050;">12</div>
<div class="a" style="left:0px;top:586px;width:24px;height:1px;background:#d4d4d4"></div>
<div class="a" style="left:25px;top:586px;width:1232px;height:1px;background:#d4d4d4"></div>
<div class="t" style="left:4.16px;top:571px;font-size:12.3px;line-height:14px;color:#505050;">13</div>
<div class="a" style="left:0px;top:603px;width:24px;height:1px;background:#d4d4d4"></div>
<div class="a" style="left:25px;top:603px;width:1232px;height:1px;background:#d4d4d4"></div>
<div class="t" style="left:4.16px;top:588px;font-size:12.3px;line-height:14px;color:#505050;">14</div>
<div class="a" style="left:0px;top:620px;width:24px;height:1px;background:#d4d4d4"></div>
<div class="a" style="left:25px;top:620px;width:1232px;height:1px;background:#d4d4d4"></div>
<div class="t" style="left:4.16px;top:605px;font-size:12.3px;line-height:14px;color:#505050;">15</div>
<div class="a" style="left:0px;top:637px;width:24px;height:1px;background:#d4d4d4"></div>
<div class="a" style="left:25px;top:637px;width:1232px;height:1px;background:#d4d4d4"></div>
<div class="t" style="left:4.16px;top:622px;font-size:12.3px;line-height:14px;color:#505050;">16</div>
<div class="a" style="left:0px;top:654px;width:24px;height:1px;background:#d4d4d4"></div>
<div class="a" style="left:25px;top:654px;width:1232px;height:1px;background:#d4d4d4"></div>
<div class="t" style="left:4.16px;top:639px;font-size:12.3px;line-height:14px;color:#505050;">17</div>
<div class="a" style="left:0px;top:671px;width:24px;height:1px;background:#d4d4d4"></div>
<div class="a" style="left:25px;top:671px;width:1232px;height:1px;background:#d4d4d4"></div>
<div class="t" style="left:4.16px;top:656px;font-size:12.3px;line-height:14px;color:#505050;">18</div>
<div class="a" style="left:0px;top:688px;width:24px;height:1px;background:#d4d4d4"></div>
<div class="a" style="left:25px;top:688px;width:1232px;height:1px;background:#d4d4d4"></div>
<div class="t" style="left:4.16px;top:673px;font-size:12.3px;line-height:14px;color:#505050;">19</div>
<div class="a" style="left:0px;top:705px;width:24px;height:1px;background:#d4d4d4"></div>
<div class="a" style="left:25px;top:705px;width:1232px;height:1px;background:#d4d4d4"></div>
<div class="t" style="left:4.16px;top:690px;font-size:12.3px;line-height:14px;color:#505050;">20</div>
<div class="a" style="left:0px;top:722px;width:24px;height:1px;background:#d4d4d4"></div>
<div class="a" style="left:25px;top:722px;width:1232px;height:1px;background:#d4d4d4"></div>
<div class="t" style="left:4.16px;top:707px;font-size:12.3px;line-height:14px;color:#505050;">21</div>
<div class="a" style="left:0px;top:739px;width:24px;height:1px;background:#d4d4d4"></div>
<div class="a" style="left:25px;top:739px;width:1232px;height:1px;background:#d4d4d4"></div>
<div class="t" style="left:4.16px;top:724px;font-size:12.3px;line-height:14px;color:#505050;">22</div>
<div class="a" style="left:0px;top:756px;width:24px;height:1px;background:#d4d4d4"></div>
<div class="a" style="left:25px;top:756px;width:1232px;height:1px;background:#d4d4d4"></div>
<div class="t" style="left:4.16px;top:741px;font-size:12.3px;line-height:14px;color:#505050;">23</div>
<div class="a" style="left:0px;top:773px;width:24px;height:1px;background:#d4d4d4"></div>
<div class="a" style="left:25px;top:773px;width:1232px;height:1px;background:#d4d4d4"></div>
<div class="t" style="left:4.16px;top:758px;font-size:12.3px;line-height:14px;color:#505050;">24</div>
<div class="a" style="left:0px;top:790px;width:24px;height:1px;background:#d4d4d4"></div>
<div class="a" style="left:25px;top:790px;width:1232px;height:1px;background:#d4d4d4"></div>
<div class="t" style="left:4.16px;top:775px;font-size:12.3px;line-height:14px;color:#505050;">25</div>
<div class="a" style="left:0px;top:807px;width:24px;height:1px;background:#d4d4d4"></div>
<div class="a" style="left:25px;top:807px;width:1232px;height:1px;background:#d4d4d4"></div>
<div class="t" style="left:4.16px;top:792px;font-size:12.3px;line-height:14px;color:#505050;">26</div>
<div class="a" style="left:0px;top:824px;width:24px;height:1px;background:#d4d4d4"></div>
<div class="a" style="left:25px;top:824px;width:1232px;height:1px;background:#d4d4d4"></div>
<div class="t" style="left:4.16px;top:809px;font-size:12.3px;line-height:14px;color:#505050;">27</div>
<div class="a" style="left:0px;top:841px;width:24px;height:1px;background:#d4d4d4"></div>
<div class="a" style="left:25px;top:841px;width:1232px;height:1px;background:#d4d4d4"></div>
<div class="t" style="left:4.16px;top:826px;font-size:12.3px;line-height:14px;color:#505050;">28</div>
<div class="a" style="left:0px;top:858px;width:24px;height:1px;background:#d4d4d4"></div>
<div class="a" style="left:25px;top:858px;width:1232px;height:1px;background:#d4d4d4"></div>
<div class="t" style="left:4.16px;top:843px;font-size:12.3px;line-height:14px;color:#505050;">29</div>
<div class="a" style="left:0px;top:875px;width:24px;height:1px;background:#d4d4d4"></div>
<div class="a" style="left:25px;top:875px;width:1232px;height:1px;background:#d4d4d4"></div>
<div class="t" style="left:4.16px;top:860px;font-size:12.3px;line-height:14px;color:#505050;">30</div>
<div class="a" style="left:0px;top:892px;width:24px;height:1px;background:#d4d4d4"></div>
<div class="a" style="left:25px;top:892px;width:1232px;height:1px;background:#d4d4d4"></div>
<div class="t" style="left:4.16px;top:877px;font-size:12.3px;line-height:14px;color:#505050;">31</div>
<div class="a" style="left:0px;top:909px;width:24px;height:1px;background:#d4d4d4"></div>
<div class="a" style="left:25px;top:909px;width:1232px;height:1px;background:#d4d4d4"></div>
<div class="t" style="left:4.16px;top:894px;font-size:12.3px;line-height:14px;color:#505050;">32</div>
<div class="a" style="left:0px;top:926px;width:24px;height:1px;background:#d4d4d4"></div>
<div class="a" style="left:25px;top:926px;width:1232px;height:1px;background:#d4d4d4"></div>
<div class="t" style="left:4.16px;top:911px;font-size:12.3px;line-height:14px;color:#505050;">33</div>
<div class="t" style="left:4.16px;top:928px;font-size:12.3px;line-height:14px;color:#505050;">34</div>
<div class="a" style="left:57px;top:249px;width:1px;height:685px;background:#d4d4d4"></div>
<div class="a" style="left:245px;top:249px;width:1px;height:685px;background:#d4d4d4"></div>
<div class="a" style="left:348px;top:249px;width:1px;height:685px;background:#d4d4d4"></div>
<div class="a" style="left:453px;top:249px;width:1px;height:685px;background:#d4d4d4"></div>
<div class="a" style="left:517px;top:249px;width:1px;height:685px;background:#d4d4d4"></div>
<div class="a" style="left:581px;top:249px;width:1px;height:685px;background:#d4d4d4"></div>
<div class="a" style="left:645px;top:249px;width:1px;height:685px;background:#d4d4d4"></div>
<div class="a" style="left:709px;top:249px;width:1px;height:685px;background:#d4d4d4"></div>
<div class="a" style="left:773px;top:249px;width:1px;height:685px;background:#d4d4d4"></div>
<div class="a" style="left:837px;top:249px;width:1px;height:685px;background:#d4d4d4"></div>
<div class="a" style="left:901px;top:249px;width:1px;height:685px;background:#d4d4d4"></div>
<div class="a" style="left:965px;top:249px;width:1px;height:685px;background:#d4d4d4"></div>
<div class="a" style="left:1029px;top:249px;width:1px;height:685px;background:#d4d4d4"></div>
<div class="a" style="left:1093px;top:249px;width:1px;height:685px;background:#d4d4d4"></div>
<div class="a" style="left:1157px;top:249px;width:1px;height:685px;background:#d4d4d4"></div>
<div class="a" style="left:1221px;top:249px;width:1px;height:685px;background:#d4d4d4"></div>
<div class="a" style="left:1257px;top:248px;width:1px;height:686px;background:#ababab"></div>
<div class="a" style="left:0px;top:934px;width:1258px;height:1px;background:#ababab"></div>
<div class="a" style="left:25px;top:266px;width:428px;height:116px;background:#fef1cd"></div>
<div class="t" style="left:27.00px;top:283px;font-size:13.33px;line-height:15px;color:#000;transform:scaleX(0.955);transform-origin:0 0;">Студенты сдают тест по теме «Рыночная экономика», оценка за тест</div>
<div class="t" style="left:27.00px;top:300px;font-size:13.33px;line-height:15px;color:#000;transform:scaleX(0.955);transform-origin:0 0;">ставится в формате «зачет»/«незачет». При этом «зачет» ставится,</div>
<div class="t" style="left:27.00px;top:317px;font-size:13.33px;line-height:15px;color:#000;transform:scaleX(0.955);transform-origin:0 0;">если набрано не менее 80 баллов.</div>
<div class="t" style="left:27.00px;top:334px;font-size:13.33px;line-height:15px;color:#000;transform:scaleX(0.955);transform-origin:0 0;">Необходимо выделить оранжевым цветом строки со студентами,</div>
<div class="t" style="left:27.00px;top:351px;font-size:13.33px;line-height:15px;color:#000;transform:scaleX(0.955);transform-origin:0 0;">которые провалили тестирование.</div>
<div class="a" style="left:23px;top:265px;width:432px;height:119px;border:2px solid #146b35"></div>
<div class="a" style="left:25px;top:267px;width:428px;height:115px;border:1px solid #fff"></div>
<div class="a" style="left:24px;top:399px;width:430px;height:1px;background:#000"></div>
<div class="a" style="left:24px;top:433px;width:430px;height:1px;background:#000"></div>
<div class="a" style="left:24px;top:450px;width:430px;height:1px;background:#000"></div>
<div class="a" style="left:24px;top:467px;width:430px;height:1px;background:#000"></div>
<div class="a" style="left:24px;top:484px;width:430px;height:1px;background:#000"></div>
<div class="a" style="left:24px;top:501px;width:430px;height:1px;background:#000"></div>
<div class="a" style="left:24px;top:518px;width:430px;height:1px;background:#000"></div>
<div class="a" style="left:24px;top:535px;width:430px;height:1px;background:#000"></div>
<div class="a" style="left:24px;top:552px;width:430px;height:1px;background:#000"></div>
<div class="a" style="left:24px;top:569px;width:430px;height:1px;background:#000"></div>
<div class="a" style="left:24px;top:586px;width:430px;height:1px;background:#000"></div>
<div class="a" style="left:24px;top:603px;width:430px;height:1px;background:#000"></div>
<div class="a" style="left:24px;top:620px;width:430px;height:1px;background:#000"></div>
<div class="a" style="left:24px;top:637px;width:430px;height:1px;background:#000"></div>
<div class="a" style="left:24px;top:654px;width:430px;height:1px;background:#000"></div>
<div class="a" style="left:24px;top:671px;width:430px;height:1px;background:#000"></div>
<div class="a" style="left:24px;top:688px;width:430px;height:1px;background:#000"></div>
<div class="a" style="left:24px;top:705px;width:430px;height:1px;background:#000"></div>
<div class="a" style="left:24px;top:722px;width:430px;height:1px;background:#000"></div>
<div class="a" style="left:24px;top:739px;width:430px;height:1px;background:#000"></div>
<div class="a" style="left:24px;top:756px;width:430px;height:1px;background:#000"></div>
<div class="a" style="left:24px;top:773px;width:430px;height:1px;background:#000"></div>
<div class="a" style="left:24px;top:790px;width:430px;height:1px;background:#000"></div>
<div class="a" style="left:24px;top:807px;width:430px;height:1px;background:#000"></div>
<div class="a" style="left:24px;top:824px;width:430px;height:1px;background:#000"></div>
<div class="a" style="left:24px;top:841px;width:430px;height:1px;background:#000"></div>
<div class="a" style="left:24px;top:399px;width:1px;height:443px;background:#000"></div>
<div class="a" style="left:57px;top:399px;width:1px;height:443px;background:#000"></div>
<div class="a" style="left:245px;top:399px;width:1px;height:443px;background:#000"></div>
<div class="a" style="left:348px;top:399px;width:1px;height:443px;background:#000"></div>
<div class="a" style="left:453px;top:399px;width:1px;height:443px;background:#000"></div>
<div class="t" style="left:34.17px;top:401px;font-size:13.33px;line-height:15px;color:#000;transform:scaleX(0.955);transform-origin:0 0;">№</div>
<div class="t" style="left:32.34px;top:418px;font-size:13.33px;line-height:15px;color:#000;transform:scaleX(0.955);transform-origin:0 0;">п/п</div>
<div class="t" style="left:109.07px;top:409px;font-size:13.33px;line-height:15px;color:#000;transform:scaleX(0.955);transform-origin:0 0;">ФИО студента</div>
<div class="t" style="left:262.82px;top:401px;font-size:13.33px;line-height:15px;color:#000;transform:scaleX(0.955);transform-origin:0 0;">Количество</div>
<div class="t" style="left:275.54px;top:418px;font-size:13.33px;line-height:15px;color:#000;transform:scaleX(0.955);transform-origin:0 0;">баллов</div>
<div class="t" style="left:372.05px;top:409px;font-size:13.33px;line-height:15px;color:#000;transform:scaleX(0.955);transform-origin:0 0;">Результат</div>
<div class="t" style="left:27.00px;top:435px;font-size:13.33px;line-height:15px;color:#000;transform:scaleX(0.955);transform-origin:0 0;">1</div>
<div class="t" style="left:60.00px;top:435px;font-size:13.33px;line-height:15px;color:#000;transform:scaleX(0.955);transform-origin:0 0;">Богатов Владислав</div>
<div class="t" style="left:248.00px;top:435px;font-size:13.33px;line-height:15px;color:#000;transform:scaleX(0.955);transform-origin:0 0;">83</div>
<div class="t" style="left:351.00px;top:435px;font-size:13.33px;line-height:15px;color:#000;transform:scaleX(0.955);transform-origin:0 0;">зачет</div>
<div class="t" style="left:27.00px;top:452px;font-size:13.33px;line-height:15px;color:#000;transform:scaleX(0.955);transform-origin:0 0;">2</div>
<div class="t" style="left:60.00px;top:452px;font-size:13.33px;line-height:15px;color:#000;transform:scaleX(0.955);transform-origin:0 0;">Веселкина Мария</div>
<div class="t" style="left:248.00px;top:452px;font-size:13.33px;line-height:15px;color:#000;transform:scaleX(0.955);transform-origin:0 0;">95</div>
<div class="t" style="left:351.00px;top:452px;font-size:13.33px;line-height:15px;color:#000;transform:scaleX(0.955);transform-origin:0 0;">зачет</div>
<div class="t" style="left:27.00px;top:469px;font-size:13.33px;line-height:15px;color:#000;transform:scaleX(0.955);transform-origin:0 0;">3</div>
<div class="t" style="left:60.00px;top:469px;font-size:13.33px;line-height:15px;color:#000;transform:scaleX(0.955);transform-origin:0 0;">Волкова Ольга</div>
<div class="t" style="left:248.00px;top:469px;font-size:13.33px;line-height:15px;color:#000;transform:scaleX(0.955);transform-origin:0 0;">74</div>
<div class="t" style="left:351.00px;top:469px;font-size:13.33px;line-height:15px;color:#000;transform:scaleX(0.955);transform-origin:0 0;">незачет</div>
<div class="t" style="left:27.00px;top:486px;font-size:13.33px;line-height:15px;color:#000;transform:scaleX(0.955);transform-origin:0 0;">4</div>
<div class="t" style="left:60.00px;top:486px;font-size:13.33px;line-height:15px;color:#000;transform:scaleX(0.955);transform-origin:0 0;">Демидов Алексей</div>
<div class="t" style="left:248.00px;top:486px;font-size:13.33px;line-height:15px;color:#000;transform:scaleX(0.955);transform-origin:0 0;">86</div>
<div class="t" style="left:351.00px;top:486px;font-size:13.33px;line-height:15px;color:#000;transform:scaleX(0.955);transform-origin:0 0;">зачет</div>
<div class="t" style="left:27.00px;top:503px;font-size:13.33px;line-height:15px;color:#000;transform:scaleX(0.955);transform-origin:0 0;">5</div>
<div class="t" style="left:60.00px;top:503px;font-size:13.33px;line-height:15px;color:#000;transform:scaleX(0.955);transform-origin:0 0;">Дорофеева Ксения</div>
<div class="t" style="left:248.00px;top:503px;font-size:13.33px;line-height:15px;color:#000;transform:scaleX(0.955);transform-origin:0 0;">88</div>
<div class="t" style="left:351.00px;top:503px;font-size:13.33px;line-height:15px;color:#000;transform:scaleX(0.955);transform-origin:0 0;">зачет</div>
<div class="t" style="left:27.00px;top:520px;font-size:13.33px;line-height:15px;color:#000;transform:scaleX(0.955);transform-origin:0 0;">6</div>
<div class="t" style="left:60.00px;top:520px;font-size:13.33px;line-height:15px;color:#000;transform:scaleX(0.955);transform-origin:0 0;">Жаворонков Анатолий</div>
<div class="t" style="left:248.00px;top:520px;font-size:13.33px;line-height:15px;color:#000;transform:scaleX(0.955);transform-origin:0 0;">92</div>
<div class="t" style="left:351.00px;top:520px;font-size:13.33px;line-height:15px;color:#000;transform:scaleX(0.955);transform-origin:0 0;">зачет</div>
<div class="t" style="left:27.00px;top:537px;font-size:13.33px;line-height:15px;color:#000;transform:scaleX(0.955);transform-origin:0 0;">7</div>
<div class="t" style="left:60.00px;top:537px;font-size:13.33px;line-height:15px;color:#000;transform:scaleX(0.955);transform-origin:0 0;">Зайцев Сергей</div>
<div class="t" style="left:248.00px;top:537px;font-size:13.33px;line-height:15px;color:#000;transform:scaleX(0.955);transform-origin:0 0;">94</div>
<div class="t" style="left:351.00px;top:537px;font-size:13.33px;line-height:15px;color:#000;transform:scaleX(0.955);transform-origin:0 0;">зачет</div>
<div class="t" style="left:27.00px;top:554px;font-size:13.33px;line-height:15px;color:#000;transform:scaleX(0.955);transform-origin:0 0;">8</div>
<div class="t" style="left:60.00px;top:554px;font-size:13.33px;line-height:15px;color:#000;transform:scaleX(0.955);transform-origin:0 0;">Капустин Михаил</div>
<div class="t" style="left:248.00px;top:554px;font-size:13.33px;line-height:15px;color:#000;transform:scaleX(0.955);transform-origin:0 0;">60</div>
<div class="t" style="left:351.00px;top:554px;font-size:13.33px;line-height:15px;color:#000;transform:scaleX(0.955);transform-origin:0 0;">незачет</div>
<div class="t" style="left:27.00px;top:571px;font-size:13.33px;line-height:15px;color:#000;transform:scaleX(0.955);transform-origin:0 0;">9</div>
<div class="t" style="left:60.00px;top:571px;font-size:13.33px;line-height:15px;color:#000;transform:scaleX(0.955);transform-origin:0 0;">Константинова Жанна</div>
<div class="t" style="left:248.00px;top:571px;font-size:13.33px;line-height:15px;color:#000;transform:scaleX(0.955);transform-origin:0 0;">80</div>
<div class="t" style="left:351.00px;top:571px;font-size:13.33px;line-height:15px;color:#000;transform:scaleX(0.955);transform-origin:0 0;">зачет</div>
<div class="t" style="left:27.00px;top:588px;font-size:13.33px;line-height:15px;color:#000;transform:scaleX(0.955);transform-origin:0 0;">10</div>
<div class="t" style="left:60.00px;top:588px;font-size:13.33px;line-height:15px;color:#000;transform:scaleX(0.955);transform-origin:0 0;">Лаврентьева Дарья</div>
<div class="t" style="left:248.00px;top:588px;font-size:13.33px;line-height:15px;color:#000;transform:scaleX(0.955);transform-origin:0 0;">81</div>
<div class="t" style="left:351.00px;top:588px;font-size:13.33px;line-height:15px;color:#000;transform:scaleX(0.955);transform-origin:0 0;">зачет</div>
<div class="t" style="left:27.00px;top:605px;font-size:13.33px;line-height:15px;color:#000;transform:scaleX(0.955);transform-origin:0 0;">11</div>
<div class="t" style="left:60.00px;top:605px;font-size:13.33px;line-height:15px;color:#000;transform:scaleX(0.955);transform-origin:0 0;">Леонтьева Екатерина</div>
<div class="t" style="left:248.00px;top:605px;font-size:13.33px;line-height:15px;color:#000;transform:scaleX(0.955);transform-origin:0 0;">80</div>
<div class="t" style="left:351.00px;top:605px;font-size:13.33px;line-height:15px;color:#000;transform:scaleX(0.955);transform-origin:0 0;">зачет</div>
<div class="t" style="left:27.00px;top:622px;font-size:13.33px;line-height:15px;color:#000;transform:scaleX(0.955);transform-origin:0 0;">12</div>
<div class="t" style="left:60.00px;top:622px;font-size:13.33px;line-height:15px;color:#000;transform:scaleX(0.955);transform-origin:0 0;">Любимов Павел</div>
<div class="t" style="left:248.00px;top:622px;font-size:13.33px;line-height:15px;color:#000;transform:scaleX(0.955);transform-origin:0 0;">90</div>
<div class="t" style="left:351.00px;top:622px;font-size:13.33px;line-height:15px;color:#000;transform:scaleX(0.955);transform-origin:0 0;">зачет</div>
<div class="t" style="left:27.00px;top:639px;font-size:13.33px;line-height:15px;color:#000;transform:scaleX(0.955);transform-origin:0 0;">13</div>
<div class="t" style="left:60.00px;top:639px;font-size:13.33px;line-height:15px;color:#000;transform:scaleX(0.955);transform-origin:0 0;">Макарова Юлия</div>
<div class="t" style="left:248.00px;top:639px;font-size:13.33px;line-height:15px;color:#000;transform:scaleX(0.955);transform-origin:0 0;">100</div>
<div class="t" style="left:351.00px;top:639px;font-size:13.33px;line-height:15px;color:#000;transform:scaleX(0.955);transform-origin:0 0;">зачет</div>
<div class="t" style="left:27.00px;top:656px;font-size:13.33px;line-height:15px;color:#000;transform:scaleX(0.955);transform-origin:0 0;">14</div>
<div class="t" style="left:60.00px;top:656px;font-size:13.33px;line-height:15px;color:#000;transform:scaleX(0.955);transform-origin:0 0;">Некрасов Роман</div>
<div class="t" style="left:248.00px;top:656px;font-size:13.33px;line-height:15px;color:#000;transform:scaleX(0.955);transform-origin:0 0;">100</div>
<div class="t" style="left:351.00px;top:656px;font-size:13.33px;line-height:15px;color:#000;transform:scaleX(0.955);transform-origin:0 0;">зачет</div>
<div class="t" style="left:27.00px;top:673px;font-size:13.33px;line-height:15px;color:#000;transform:scaleX(0.955);transform-origin:0 0;">15</div>
<div class="t" style="left:60.00px;top:673px;font-size:13.33px;line-height:15px;color:#000;transform:scaleX(0.955);transform-origin:0 0;">Романцов Дмитрий</div>
<div class="t" style="left:248.00px;top:673px;font-size:13.33px;line-height:15px;color:#000;transform:scaleX(0.955);transform-origin:0 0;">95</div>
<div class="t" style="left:351.00px;top:673px;font-size:13.33px;line-height:15px;color:#000;transform:scaleX(0.955);transform-origin:0 0;">зачет</div>
<div class="t" style="left:27.00px;top:690px;font-size:13.33px;line-height:15px;color:#000;transform:scaleX(0.955);transform-origin:0 0;">16</div>
<div class="t" style="left:60.00px;top:690px;font-size:13.33px;line-height:15px;color:#000;transform:scaleX(0.955);transform-origin:0 0;">Самойлова Наталья</div>
<div class="t" style="left:248.00px;top:690px;font-size:13.33px;line-height:15px;color:#000;transform:scaleX(0.955);transform-origin:0 0;">99</div>
<div class="t" style="left:351.00px;top:690px;font-size:13.33px;line-height:15px;color:#000;transform:scaleX(0.955);transform-origin:0 0;">зачет</div>
<div class="t" style="left:27.00px;top:707px;font-size:13.33px;line-height:15px;color:#000;transform:scaleX(0.955);transform-origin:0 0;">17</div>
<div class="t" style="left:60.00px;top:707px;font-size:13.33px;line-height:15px;color:#000;transform:scaleX(0.955);transform-origin:0 0;">Степанов Николай</div>
<div class="t" style="left:248.00px;top:707px;font-size:13.33px;line-height:15px;color:#000;transform:scaleX(0.955);transform-origin:0 0;">96</div>
<div class="t" style="left:351.00px;top:707px;font-size:13.33px;line-height:15px;color:#000;transform:scaleX(0.955);transform-origin:0 0;">зачет</div>
<div class="t" style="left:27.00px;top:724px;font-size:13.33px;line-height:15px;color:#000;transform:scaleX(0.955);transform-origin:0 0;">18</div>
<div class="t" style="left:60.00px;top:724px;font-size:13.33px;line-height:15px;color:#000;transform:scaleX(0.955);transform-origin:0 0;">Федорова Светлана</div>
<div class="t" style="left:248.00px;top:724px;font-size:13.33px;line-height:15px;color:#000;transform:scaleX(0.955);transform-origin:0 0;">73</div>
<div class="t" style="left:351.00px;top:724px;font-size:13.33px;line-height:15px;color:#000;transform:scaleX(0.955);transform-origin:0 0;">незачет</div>
<div class="t" style="left:27.00px;top:741px;font-size:13.33px;line-height:15px;color:#000;transform:scaleX(0.955);transform-origin:0 0;">19</div>
<div class="t" style="left:60.00px;top:741px;font-size:13.33px;line-height:15px;color:#000;transform:scaleX(0.955);transform-origin:0 0;">Фролова Наталья</div>
<div class="t" style="left:248.00px;top:741px;font-size:13.33px;line-height:15px;color:#000;transform:scaleX(0.955);transform-origin:0 0;">88</div>
<div class="t" style="left:351.00px;top:741px;font-size:13.33px;line-height:15px;color:#000;transform:scaleX(0.955);transform-origin:0 0;">зачет</div>
<div class="t" style="left:27.00px;top:758px;font-size:13.33px;line-height:15px;color:#000;transform:scaleX(0.955);transform-origin:0 0;">20</div>
<div class="t" style="left:60.00px;top:758px;font-size:13.33px;line-height:15px;color:#000;transform:scaleX(0.955);transform-origin:0 0;">Храмов Владимир</div>
<div class="t" style="left:248.00px;top:758px;font-size:13.33px;line-height:15px;color:#000;transform:scaleX(0.955);transform-origin:0 0;">85</div>
<div class="t" style="left:351.00px;top:758px;font-size:13.33px;line-height:15px;color:#000;transform:scaleX(0.955);transform-origin:0 0;">зачет</div>
<div class="t" style="left:27.00px;top:775px;font-size:13.33px;line-height:15px;color:#000;transform:scaleX(0.955);transform-origin:0 0;">21</div>
<div class="t" style="left:60.00px;top:775px;font-size:13.33px;line-height:15px;color:#000;transform:scaleX(0.955);transform-origin:0 0;">Царева Екатерина</div>
<div class="t" style="left:248.00px;top:775px;font-size:13.33px;line-height:15px;color:#000;transform:scaleX(0.955);transform-origin:0 0;">80</div>
<div class="t" style="left:351.00px;top:775px;font-size:13.33px;line-height:15px;color:#000;transform:scaleX(0.955);transform-origin:0 0;">зачет</div>
<div class="t" style="left:27.00px;top:792px;font-size:13.33px;line-height:15px;color:#000;transform:scaleX(0.955);transform-origin:0 0;">22</div>
<div class="t" style="left:60.00px;top:792px;font-size:13.33px;line-height:15px;color:#000;transform:scaleX(0.955);transform-origin:0 0;">Цветкова Елена</div>
<div class="t" style="left:248.00px;top:792px;font-size:13.33px;line-height:15px;color:#000;transform:scaleX(0.955);transform-origin:0 0;">90</div>
<div class="t" style="left:351.00px;top:792px;font-size:13.33px;line-height:15px;color:#000;transform:scaleX(0.955);transform-origin:0 0;">зачет</div>
<div class="t" style="left:27.00px;top:809px;font-size:13.33px;line-height:15px;color:#000;transform:scaleX(0.955);transform-origin:0 0;">23</div>
<div class="t" style="left:60.00px;top:809px;font-size:13.33px;line-height:15px;color:#000;transform:scaleX(0.955);transform-origin:0 0;">Чайкина Василиса</div>
<div class="t" style="left:248.00px;top:809px;font-size:13.33px;line-height:15px;color:#000;transform:scaleX(0.955);transform-origin:0 0;">96</div>
<div class="t" style="left:351.00px;top:809px;font-size:13.33px;line-height:15px;color:#000;transform:scaleX(0.955);transform-origin:0 0;">зачет</div>
<div class="t" style="left:27.00px;top:826px;font-size:13.33px;line-height:15px;color:#000;transform:scaleX(0.955);transform-origin:0 0;">24</div>
<div class="t" style="left:60.00px;top:826px;font-size:13.33px;line-height:15px;color:#000;transform:scaleX(0.955);transform-origin:0 0;">Шишкина Лариса</div>
<div class="t" style="left:248.00px;top:826px;font-size:13.33px;line-height:15px;color:#000;transform:scaleX(0.955);transform-origin:0 0;">78</div>
<div class="t" style="left:351.00px;top:826px;font-size:13.33px;line-height:15px;color:#000;transform:scaleX(0.955);transform-origin:0 0;">незачет</div>
<div class="a" style="left:1258px;top:229px;width:21px;height:706px;background:#fff"></div>
<div class="a" style="left:1261px;top:231px;width:15px;height:15px;border:1px solid #ababab;background:#fff"></div>
<svg class="a" style="left:1263px;top:233px" width="11" height="11"><path d="M1.5 8 L5.5 4 L9.5 8 Z" fill="#777"/></svg>
<div class="a" style="left:1261px;top:246px;width:15px;height:653px;border:1px solid #ababab;border-top-width:2px;background:#fff"></div>
<div class="a" style="left:1261px;top:899px;width:15px;height:21px;background:#f0f0f0"></div>
<div class="a" style="left:1261px;top:920px;width:15px;height:15px;border:1px solid #ababab;background:#fff"></div>
<svg class="a" style="left:1263px;top:922px" width="11" height="11"><path d="M1.5 4 L5.5 8 L9.5 4 Z" fill="#777"/></svg>
<div class="a" style="left:0px;top:935px;width:1279px;height:26px;background:#f3f3f3"></div>
<div class="a" style="left:0px;top:961px;width:1279px;height:1px;background:#fff"></div>
<div class="a" style="left:1258px;top:935px;width:19px;height:2px;background:#fff"></div>
<svg class="a" style="left:24px;top:942px" width="10" height="12"><path d="M7 2 L3 6 L7 10 Z" fill="#bdbdbd"/></svg>
<svg class="a" style="left:53px;top:942px" width="10" height="12"><path d="M3 2 L7 6 L3 10 Z" fill="#bdbdbd"/></svg>
<div class="a" style="left:99px;top:934px;width:86px;height:25px;background:#fff;border-left:1px solid #ababab;border-right:1px solid #ababab"></div>
<div class="a" style="left:99px;top:957px;width:86px;height:2px;background:#217346"></div>
<div class="t" style="left:111.55px;top:940px;font-size:13px;line-height:15px;color:#217346;font-weight:bold;">Пример 1</div>
<svg class="a" style="left:217px;top:939px" width="18" height="18"><circle cx="9" cy="9" r="7.5" fill="none" stroke="#777" stroke-width="1.3"/><path d="M9 5 V13 M5 9 H13" stroke="#666" stroke-width="2"/></svg>
<div class="a" style="left:767px;top:943px;width:2px;height:2px;background:#9a9a9a"></div>
<div class="a" style="left:767px;top:947px;width:2px;height:2px;background:#9a9a9a"></div>
<div class="a" style="left:767px;top:951px;width:2px;height:2px;background:#9a9a9a"></div>
<div class="a" style="left:784px;top:941px;width:15px;height:15px;border:1px solid #ababab;background:#fff"></div>
<svg class="a" style="left:786px;top:943px" width="11" height="11"><path d="M7.5 1.5 L3.5 5.5 L7.5 9.5 Z" fill="#666"/></svg>
<div class="a" style="left:799px;top:941px;width:416px;height:15px;border:1px solid #ababab;border-left-width:2px;background:#fff"></div>
<div class="a" style="left:1215px;top:941px;width:28px;height:15px;background:#e6e6e6"></div>
<div class="a" style="left:1243px;top:941px;width:15px;height:15px;border:1px solid #ababab;background:#fff"></div>
<svg class="a" style="left:1245px;top:943px" width="11" height="11"><path d="M3.5 1.5 L7.5 5.5 L3.5 9.5 Z" fill="#666"/></svg>
<div class="a" style="left:0px;top:962px;width:1279px;height:23px;background:#217346"></div>
<div class="a" style="left:0px;top:984px;width:1279px;height:1px;background:#0f0a10"></div>
<div class="t" style="left:7.00px;top:965px;font-size:11.87px;line-height:14px;color:#fff;transform:scaleX(0.901);transform-origin:0 0;">ГОТОВО</div>
<div class="a" style="left:987px;top:962px;width:37px;height:22px;background:#19592f"></div>
<svg class="a" style="left:998px;top:965px" width="16" height="16"><g fill="none" stroke="#fff" stroke-width="1.2"><rect x="1.5" y="1.5" width="12" height="12"/><path d="M5.5 1.5V13.5M9.5 1.5V13.5M1.5 5.5H13.5M1.5 9.5H13.5"/></g></svg>
<svg class="a" style="left:1036px;top:965px" width="16" height="16"><g fill="none" stroke="#fff" stroke-width="1.2"><rect x="1.5" y="1.5" width="13" height="12"/><rect x="4.5" y="3.5" width="7" height="8"/></g><rect x="6" y="5" width="4" height="1" fill="#fff"/><rect x="6" y="7" width="4" height="1" fill="#fff"/><rect x="6" y="9" width="4" height="1" fill="#fff"/></svg>
<svg class="a" style="left:1074px;top:965px" width="16" height="16"><g fill="none" stroke="#fff" stroke-width="1.2"><rect x="1.5" y="1.5" width="13" height="12"/></g><rect x="2.5" y="2" width="3" height="6" fill="#fff"/><rect x="6.5" y="2" width="3" height="6" fill="#fff"/></svg>
<div class="a" style="left:1106px;top:972px;width:6px;height:2px;background:#fff"></div>
<div class="a" style="left:1116px;top:972px;width:100px;height:1px;background:#fff"></div>
<div class="a" style="left:1164px;top:966px;width:4px;height:12px;background:#fff"></div>
<div class="a" style="left:1220px;top:972px;width:9px;height:2px;background:#fff"></div>
<div class="a" style="left:1223.5px;top:968px;width:2px;height:9px;background:#fff"></div>
<div class="t" style="left:1245.00px;top:965px;font-size:11.87px;line-height:14px;color:#fff;transform:scaleX(0.856);transform-origin:0 0;">100%</div>
<div class="a" style="left:329px;top:239px;width:584px;height:405px;background:#f0f0f0;border:1px solid #1883d7;box-shadow:0 4px 16px rgba(0,0,0,0.38)"></div>
<div class="a" style="left:330px;top:240px;width:582px;height:25px;background:#fff"></div>
<div class="t" style="left:334.00px;top:246px;font-size:11.03px;line-height:12px;color:#000;transform:scaleX(1.058);transform-origin:0 0;">Создание правила форматирования</div>
<div class="t" style="left:840.38px;top:244px;font-size:13px;line-height:15px;color:#000;">?</div>
<svg class="a" style="left:883px;top:246px" width="12" height="12"><path d="M0.5 0.5L11.5 11.5M11.5 0.5L0.5 11.5" stroke="#000" stroke-width="1.1"/></svg>
<div class="t" style="left:337.20px;top:276px;font-size:11.45px;line-height:12px;color:#000;">Выберите тип правила:</div>
<div class="a" style="left:352px;top:287px;width:7px;height:1px;background:#000"></div>
<div class="a" style="left:336px;top:291px;width:570px;height:114px;border:2px solid #7a7a7a;background:#fff"></div>
<div class="a" style="left:339px;top:294px;width:564px;height:17px;background:#0078d7"></div>
<div class="t" style="left:357.00px;top:298px;font-size:11.31px;line-height:12px;color:#fff;transform:scaleX(1.037);transform-origin:0 0;">Форматировать все ячейки на основании их значений</div>
<svg class="a" style="left:345px;top:300px" width="10" height="8"><rect x="0.6" y="2" width="2" height="4" fill="#fff"/><path d="M2.5 3H7L9 4L7 5H2.5Z" fill="#fff"/></svg>
<div class="t" style="left:357.00px;top:316px;font-size:11.31px;line-height:12px;color:#000;transform:scaleX(1.038);transform-origin:0 0;">Форматировать только ячейки, которые содержат</div>
<svg class="a" style="left:345px;top:318px" width="10" height="8"><rect x="0.6" y="2" width="2" height="4" fill="#000"/><path d="M2.5 3H7L9 4L7 5H2.5Z" fill="#000"/></svg>
<div class="a" style="left:339px;top:329px;width:563px;height:1px;background:#f0f0f0"></div>
<div class="t" style="left:357.00px;top:334px;font-size:11.31px;line-height:12px;color:#000;transform:scaleX(1.027);transform-origin:0 0;">Форматировать только первые или последние значения</div>
<svg class="a" style="left:345px;top:336px" width="10" height="8"><rect x="0.6" y="2" width="2" height="4" fill="#000"/><path d="M2.5 3H7L9 4L7 5H2.5Z" fill="#000"/></svg>
<div class="a" style="left:339px;top:347px;width:563px;height:1px;background:#f0f0f0"></div>
<div class="t" style="left:357.00px;top:352px;font-size:11.31px;line-height:12px;color:#000;transform:scaleX(1.028);transform-origin:0 0;">Форматировать только значения, которые находятся выше или ниже среднего</div>
<svg class="a" style="left:345px;top:354px" width="10" height="8"><rect x="0.6" y="2" width="2" height="4" fill="#000"/><path d="M2.5 3H7L9 4L7 5H2.5Z" fill="#000"/></svg>
<div class="a" style="left:339px;top:365px;width:563px;height:1px;background:#f0f0f0"></div>
<div class="t" style="left:357.00px;top:370px;font-size:11.31px;line-height:12px;color:#000;transform:scaleX(1.030);transform-origin:0 0;">Форматировать только уникальные или повторяющиеся значения</div>
<svg class="a" style="left:345px;top:372px" width="10" height="8"><rect x="0.6" y="2" width="2" height="4" fill="#000"/><path d="M2.5 3H7L9 4L7 5H2.5Z" fill="#000"/></svg>
<div class="a" style="left:339px;top:383px;width:563px;height:1px;background:#f0f0f0"></div>
<div class="t" style="left:357.00px;top:388px;font-size:11.31px;line-height:12px;color:#000;">Использовать формулу для определения форматируемых ячеек</div>
<svg class="a" style="left:345px;top:390px" width="10" height="8"><rect x="0.6" y="2" width="2" height="4" fill="#000"/><path d="M2.5 3H7L9 4L7 5H2.5Z" fill="#000"/></svg>
<div class="a" style="left:339px;top:401px;width:563px;height:1px;background:#f0f0f0"></div>
<div class="t" style="left:337.20px;top:421px;font-size:10.89px;line-height:12px;color:#000;transform:scaleX(1.059);transform-origin:0 0;">Измените описание правила:</div>
<div class="a" style="left:337px;top:432px;width:7px;height:1px;background:#000"></div>
<div class="a" style="left:336px;top:436px;width:570px;height:174px;border:1px solid #a0a0a0;background:#fff"></div>
<div class="t" style="left:346.00px;top:446px;font-size:11.17px;line-height:12px;color:#000;font-weight:bold;transform:scaleX(0.983);transform-origin:0 0;">Форматировать все ячейки на основании их значений:</div>
<div class="t" style="left:346.00px;top:463px;font-size:10.47px;line-height:11px;color:#000;transform:scaleX(1.069);transform-origin:0 0;">Стиль формата:</div>
<div class="a" style="left:371px;top:473px;width:6px;height:1px;background:#000"></div>
<div class="a" style="left:441px;top:461px;width:129px;height:21px;border:1px solid #adadad;background:#fff"></div>
<div class="a" style="left:551px;top:463px;width:17px;height:17px;border:1px solid #adadad;background:#e1e1e1"></div>
<svg class="a" style="left:554px;top:470px" width="11" height="7"><path d="M1 1L5.5 5.5L10 1" fill="none" stroke="#555" stroke-width="1"/></svg>
<div class="t" style="left:445.00px;top:465px;font-size:10.89px;line-height:12px;color:#000;transform:scaleX(1.028);transform-origin:0 0;">Двухцветная шкала</div>
<div class="t" style="left:412.50px;top:491px;font-size:10.47px;line-height:11px;color:#000;transform:scaleX(1.122);transform-origin:0 0;">Минимальное значение</div>
<div class="t" style="left:731.00px;top:491px;font-size:10.47px;line-height:11px;color:#000;transform:scaleX(1.112);transform-origin:0 0;">Максимальное значение</div>
<div class="t" style="left:346.00px;top:510px;font-size:10.89px;line-height:12px;color:#000;">Тип:</div>
<div class="a" style="left:346px;top:521px;width:6px;height:1px;background:#000"></div>
<div class="a" style="left:411px;top:505px;width:162px;height:21px;border:1px solid #adadad;background:#fff"></div>
<div class="a" style="left:554px;top:507px;width:17px;height:17px;border:1px solid #adadad;background:#e1e1e1"></div>
<svg class="a" style="left:557px;top:514px" width="11" height="7"><path d="M1 1L5.5 5.5L10 1" fill="none" stroke="#555" stroke-width="1"/></svg>
<div class="t" style="left:415.60px;top:509px;font-size:10.89px;line-height:12px;color:#000;transform:scaleX(1.076);transform-origin:0 0;">Минимальное значение</div>
<div class="a" style="left:730px;top:505px;width:165px;height:21px;border:1px solid #adadad;background:#fff"></div>
<div class="a" style="left:876px;top:507px;width:17px;height:17px;border:1px solid #adadad;background:#e1e1e1"></div>
<svg class="a" style="left:879px;top:514px" width="11" height="7"><path d="M1 1L5.5 5.5L10 1" fill="none" stroke="#555" stroke-width="1"/></svg>
<div class="t" style="left:734.20px;top:509px;font-size:10.89px;line-height:12px;color:#000;transform:scaleX(1.069);transform-origin:0 0;">Максимальное значение</div>
<div class="t" style="left:346.00px;top:534px;font-size:11.45px;line-height:12px;color:#000;transform:scaleX(1.010);transform-origin:0 0;">Значение:</div>
<div class="a" style="left:346px;top:546px;width:7px;height:1px;background:#000"></div>
<div class="a" style="left:411px;top:530px;width:162px;height:20px;border:1px solid #adadad;background:#fff"></div>
<div class="a" style="left:551px;top:529px;width:22px;height:21px;border:2px solid #b3b3b3;background:#e8e8e8"></div>
<div class="t" style="left:415.00px;top:534px;font-size:11.45px;line-height:12px;color:#6d6d6d;transform:scaleX(1.025);transform-origin:0 0;">(Минимальное значение</div>
<svg class="a" style="left:554px;top:533px" width="16" height="14" viewBox="0 0 16 14">
<defs><linearGradient id="rg554" x1="0" y1="0" x2="1" y2="1"><stop offset="0" stop-color="#ffffff"/><stop offset="1" stop-color="#9db6e6"/></linearGradient></defs>
<rect x="0.5" y="0.5" width="14.5" height="12.5" fill="url(#rg554)" stroke="#3f62a8"/>
<path d="M0.5 4H15M0.5 7.5H15M0.5 11H15M5.5 0.5V13M10.5 0.5V13" stroke="#4a6fb8" stroke-width="1"/>
<rect x="0.5" y="0.5" width="5" height="1.5" fill="#3a6fd0"/><rect x="1" y="2.5" width="4" height="1.5" fill="#1b2f55"/>
<path d="M4.5 3.5L10 4.2L8.6 5.6L12.5 9.5L11 11L7.1 7.1L5.7 8.5Z" fill="#d8301f" stroke="#9c1a10" stroke-width="0.5"/>
</svg>
<div class="a" style="left:730px;top:530px;width:165px;height:20px;border:1px solid #adadad;background:#fff"></div>
<div class="a" style="left:873px;top:529px;width:22px;height:21px;border:2px solid #b3b3b3;background:#e8e8e8"></div>
<div class="t" style="left:734.00px;top:534px;font-size:11.45px;line-height:12px;color:#6d6d6d;transform:scaleX(1.020);transform-origin:0 0;">(Максимальное значение</div>
<svg class="a" style="left:876px;top:533px" width="16" height="14" viewBox="0 0 16 14">
<defs><linearGradient id="rg876" x1="0" y1="0" x2="1" y2="1"><stop offset="0" stop-color="#ffffff"/><stop offset="1" stop-color="#9db6e6"/></linearGradient></defs>
<rect x="0.5" y="0.5" width="14.5" height="12.5" fill="url(#rg876)" stroke="#3f62a8"/>
<path d="M0.5 4H15M0.5 7.5H15M0.5 11H15M5.5 0.5V13M10.5 0.5V13" stroke="#4a6fb8" stroke-width="1"/>
<rect x="0.5" y="0.5" width="5" height="1.5" fill="#3a6fd0"/><rect x="1" y="2.5" width="4" height="1.5" fill="#1b2f55"/>
<path d="M4.5 3.5L10 4.2L8.6 5.6L12.5 9.5L11 11L7.1 7.1L5.7 8.5Z" fill="#d8301f" stroke="#9c1a10" stroke-width="0.5"/>
</svg>
<div class="t" style="left:346.00px;top:556px;font-size:11.17px;line-height:12px;color:#000;transform:scaleX(1.066);transform-origin:0 0;">Цвет:</div>
<div class="a" style="left:353px;top:568px;width:7px;height:1px;background:#000"></div>
<div class="a" style="left:411px;top:553px;width:162px;height:18px;border:1px solid #adadad;background:#fff"></div>
<div class="a" style="left:413px;top:556px;width:139px;height:12px;background:#ff7128"></div>
<div class="a" style="left:553px;top:554px;width:19px;height:16px;border:1px solid #adadad;background:#e1e1e1"></div>
<svg class="a" style="left:557px;top:560px" width="11" height="7"><path d="M1 1L5.5 5.5L10 1" fill="none" stroke="#555" stroke-width="1"/></svg>
<div class="a" style="left:730px;top:553px;width:165px;height:18px;border:1px solid #adadad;background:#fff"></div>
<div class="a" style="left:732px;top:556px;width:142px;height:12px;background:#ffeb94"></div>
<div class="a" style="left:875px;top:554px;width:19px;height:16px;border:1px solid #adadad;background:#e1e1e1"></div>
<svg class="a" style="left:879px;top:560px" width="11" height="7"><path d="M1 1L5.5 5.5L10 1" fill="none" stroke="#555" stroke-width="1"/></svg>
<div class="t" style="left:346.00px;top:584px;font-size:12.01px;line-height:14px;color:#000;font-weight:bold;transform:scaleX(0.892);transform-origin:0 0;">Образец:</div>
<div class="a" style="left:398px;top:578px;width:497px;height:25px;border:1px solid #646464;background:#fff"></div>
<div class="a" style="left:401px;top:581px;width:492px;height:19px;background:linear-gradient(to right,#ff7128,#ffeb94)"></div>
<div class="a" style="left:743px;top:614px;width:73px;height:21px;border:2px solid #0078d7;background:#e1e1e1"></div>
<div class="t" style="left:772.60px;top:620px;font-size:10.47px;line-height:11px;color:#000;transform:scaleX(0.952);transform-origin:0 0;">OK</div>
<div class="a" style="left:827px;top:614px;width:73px;height:21px;border:1px solid #adadad;background:#e1e1e1"></div>
<div class="t" style="left:843.40px;top:620px;font-size:10.47px;line-height:11px;color:#000;transform:scaleX(1.054);transform-origin:0 0;">Отмена</div>
</body></html>
